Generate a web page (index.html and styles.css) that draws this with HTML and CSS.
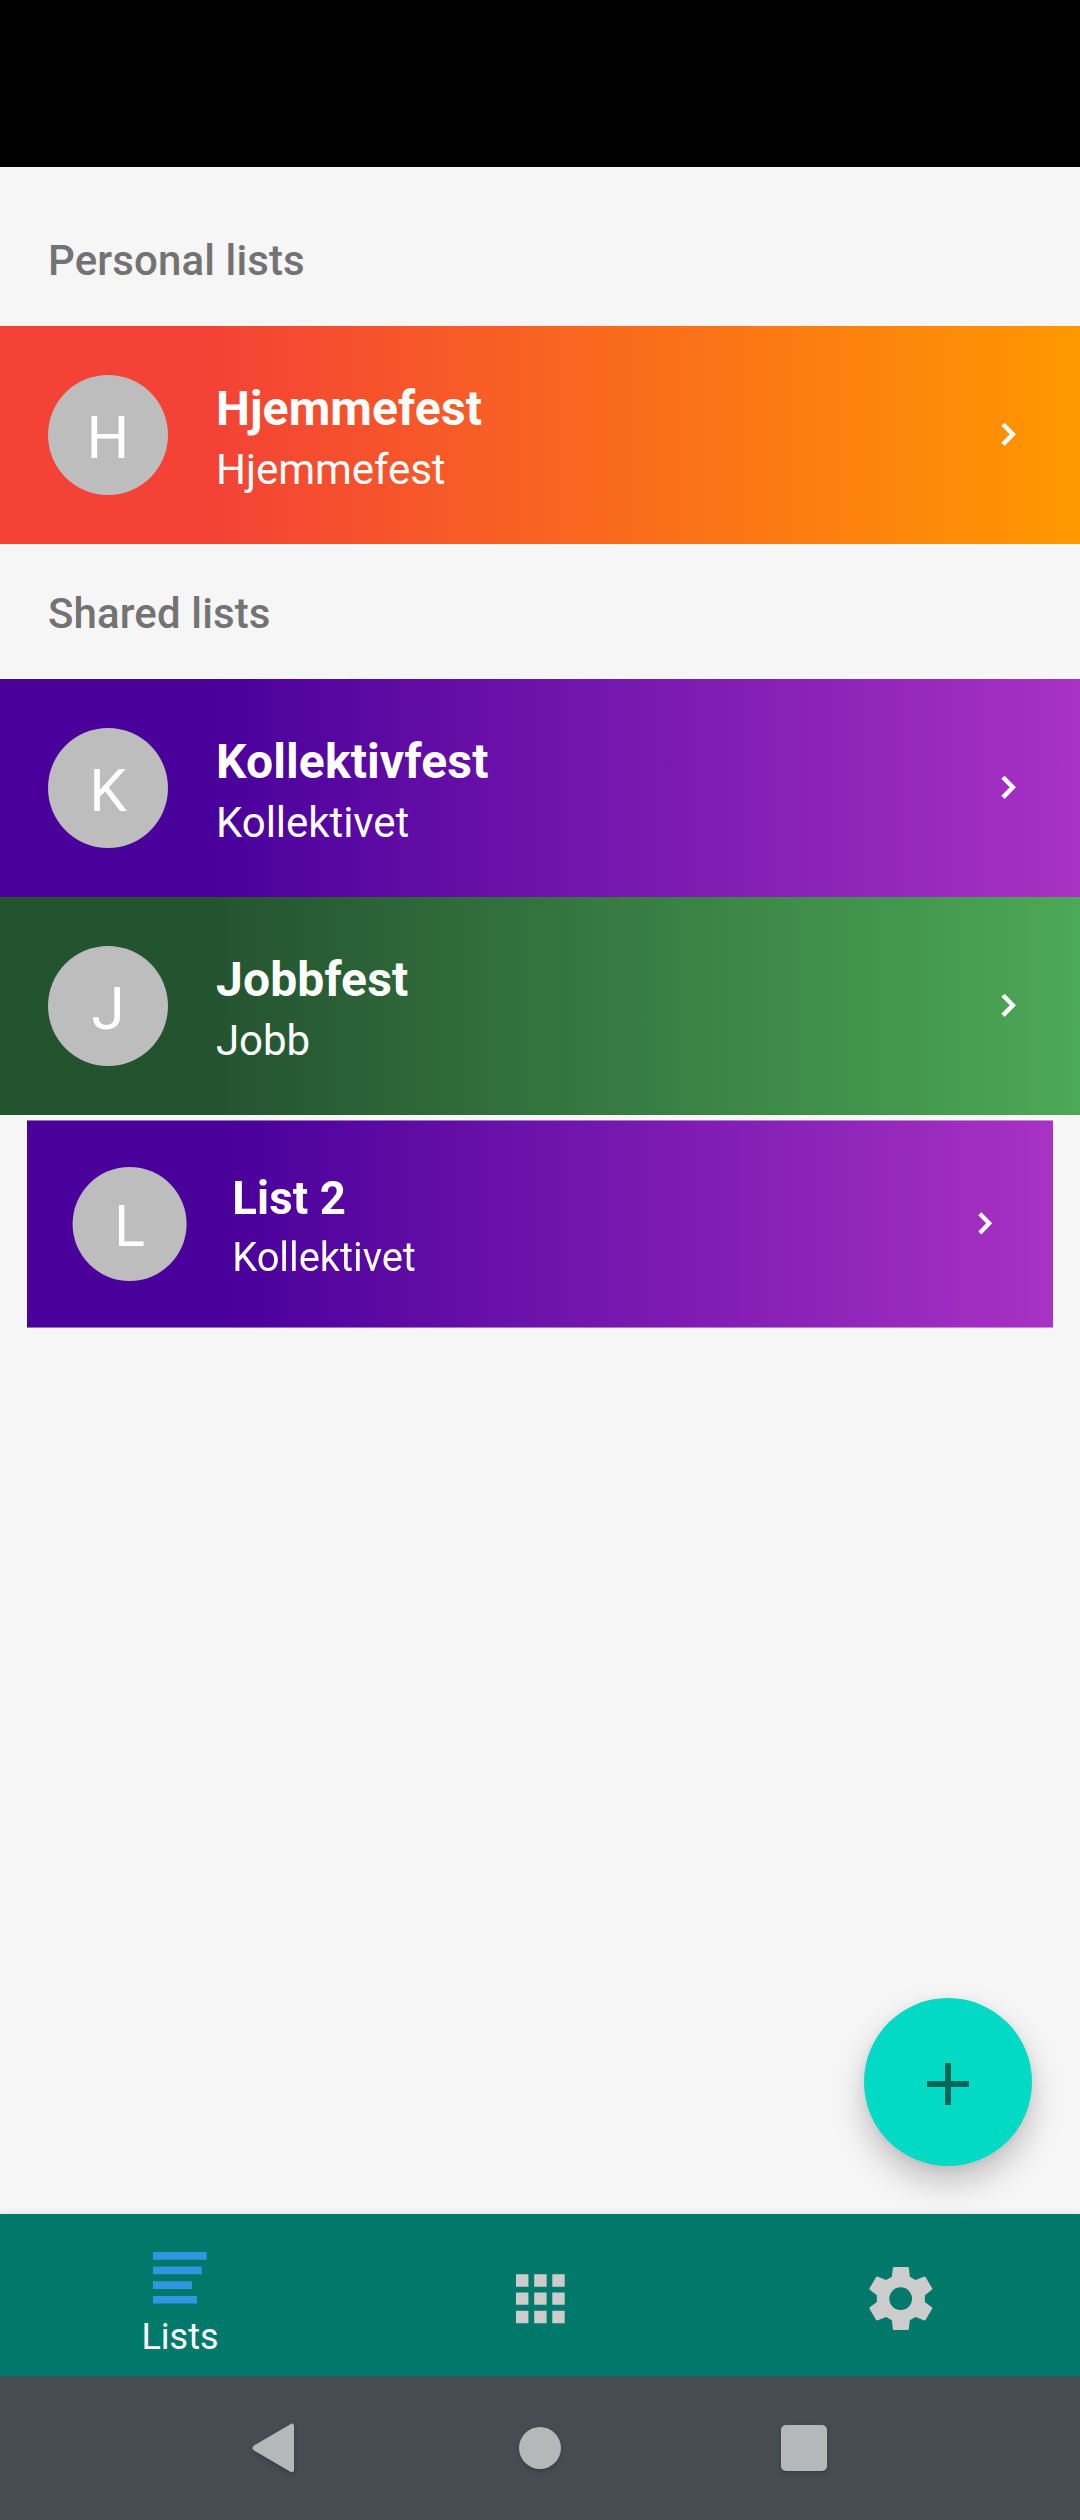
FILE: index.html
```html
<!DOCTYPE html>
<html lang="en">
<head>
<meta charset="utf-8">
<title>Lists</title>
<link rel="stylesheet" href="styles.css">
</head>
<body>
<div class="screen">
  <div class="status-bar"></div>
  <main class="content">
    <h2 class="heading heading-first">Personal lists</h2>
    <div class="row orange">
      <div class="avatar">H</div>
      <div class="texts"><div class="title">Hjemmefest</div><div class="subtitle">Hjemmefest</div></div>
      <svg class="chevron" viewBox="0 0 16 26"><path d="M2 2.200 11.800 12.300 2 22.400"/></svg>
    </div>
    <h2 class="heading">Shared lists</h2>
    <div class="row purple">
      <div class="avatar">K</div>
      <div class="texts"><div class="title">Kollektivfest</div><div class="subtitle">Kollektivet</div></div>
      <svg class="chevron" viewBox="0 0 16 26"><path d="M2 2.200 11.800 12.300 2 22.400"/></svg>
    </div>
    <div class="row green">
      <div class="avatar">J</div>
      <div class="texts"><div class="title">Jobbfest</div><div class="subtitle">Jobb</div></div>
      <svg class="chevron" viewBox="0 0 16 26"><path d="M2 2.200 11.800 12.300 2 22.400"/></svg>
    </div>
    <div class="row purple pressed">
      <div class="avatar">L</div>
      <div class="texts"><div class="title">List 2</div><div class="subtitle">Kollektivet</div></div>
      <svg class="chevron" viewBox="0 0 16 26"><path d="M2 2.200 11.800 12.300 2 22.400"/></svg>
    </div>
    <button class="fab" aria-label="Add list"><svg width="42" height="42" viewBox="0 0 42 42"><path d="M18 0h6v18h18v6H24v18h-6V24H0v-6h18z"/></svg></button>
  </main>
  <nav class="tabs">
    <div class="tab active">
      <svg width="54" height="52" viewBox="0 0 54 52"><path d="M0 0h53.7v7.7H0zM0 14.6h48.8v7.6H0zM0 29.3h39v7.6H0zM0 44h44v7.6H0z"/></svg>
      <span class="tab-label">Lists</span>
    </div>
    <div class="tab">
      <svg width="50" height="50" viewBox="0 0 50 50"><path d="M1 .3h12.4v12.4H1zM19.2.3h12.4v12.4H19.2zM37.3.3h12.4v12.4H37.3zM1 18.4h12.4v12.4H1zM19.2 18.4h12.4v12.4H19.2zM37.3 18.4h12.4v12.4H37.3zM1 36.8h12.4v12.4H1zM19.2 36.8h12.4v12.4H19.2zM37.3 36.8h12.4v12.4H37.3z"/></svg>
    </div>
    <div class="tab">
      <svg class="gear" width="72" height="72" viewBox="0 0 216 216"><path fill-rule="evenodd" d="M90 15h41q3 0 3.500 3l3 26 17 10 25-10q3-1 5 1l20 34q1 3-1 4l-21 17v20l21 16q2 2 1 4l-20 34q-2 2-5 1l-25-10-17 10-3 26q-.5 3-3.500 3h-41q-3 0-3.500-3l-3-26-17-10-25 10q-3 1-5-1l-20-34q-1-2 1-4l21-16v-20l-21-17q-2-1-1-4l20-34q2-2 5-1l25 10 17-10 3-26q.5-3 3.500-3zM110 76a34 34 0 1 0 0 68 34 34 0 0 0 0-68z"/></svg>
    </div>
  </nav>
  <footer class="system-nav">
    <svg class="back" width="44" height="50" viewBox="0 0 44 50"><path d="M38 1.500q4-2.500 4 2v43q0 4-4 2L2 27.500q-3-2.500 0-5z"/></svg>
    <svg class="home" width="42" height="42" viewBox="0 0 42 42"><circle cx="21" cy="21" r="21"/></svg>
    <svg class="recent" width="46" height="46" viewBox="0 0 46 46"><rect width="46" height="46" rx="5"/></svg>
  </footer>
</div>
</body>
</html>
```
FILE: styles.css
```css
* { box-sizing: border-box; }
body { margin: 0; font-family: Roboto, sans-serif; }
.screen { width: 1080px; height: 2520px; display: flex; flex-direction: column; background: #f6f6f6; overflow: hidden; }
.status-bar { height: 167px; flex: none; background: #000; }
.content { flex: 1; position: relative; }
.heading { margin: 0; height: 135px; padding: 45px 48px 0; font-size: 42px; line-height: 50px; font-weight: 500; letter-spacing: .12px; color: #737373; }
.heading-first { height: 159px; padding-top: 69px; }
.row { height: 218px; padding: 0 63px 0 48px; display: flex; align-items: center; color: #fff; }
.orange { background: linear-gradient(90deg, #f44336 20%, #ff9800); }
.purple { background: linear-gradient(90deg, #4a009b 20%, #a832c4); }
.green { background: linear-gradient(90deg, #245330 20%, #4ca956); }
.pressed { transform: scale(.95); }
.avatar { width: 120px; height: 120px; border-radius: 50%; background: #bdbdbd; display: flex; align-items: center; justify-content: center; font-size: 60px; line-height: 70px; padding-top: 6px; }
.texts { flex: 1; padding: 5px 0 0 48px; }
.title { font-size: 48px; line-height: 64px; font-weight: 700; letter-spacing: .12px; }
.subtitle { font-size: 42px; line-height: 57px; letter-spacing: -.05px; }
.chevron { width: 16px; height: 26px; fill: none; stroke: #fff; stroke-width: 4.500; }
.fab { position: absolute; right: 48px; bottom: 48px; width: 168px; height: 168px; padding: 4px 0 0; border: 0; border-radius: 50%; background: #03dac6; display: flex; align-items: center; justify-content: center; box-shadow: 0 16px 32px rgba(0,0,0,.22), 0 2px 10px rgba(0,0,0,.06); }
.fab svg { fill: #00675b; }
.tabs { height: 162px; flex: none; display: flex; background: #00796b; box-shadow: 0 0 8px rgba(0,0,0,.1); }
.tab { flex: 1; display: flex; flex-direction: column; align-items: center; justify-content: center; fill: #ccc; padding-top: 7px; }
.gear { margin-bottom: 1px; }
.active { justify-content: flex-start; padding-top: 38px; fill: #3295e0; }
.tab-label { margin-top: 12px; font-size: 36px; line-height: 42px; color: #fff; }
.system-nav { height: 144px; flex: none; display: flex; align-items: center; justify-content: space-between; padding: 0 253px 0 252px; background: #454d53; fill: #b4b8b9; }
.system-nav svg { filter: drop-shadow(0 2px 2px rgba(0,0,0,.2)); }
.system-nav .home { margin-left: 3px; }
```
